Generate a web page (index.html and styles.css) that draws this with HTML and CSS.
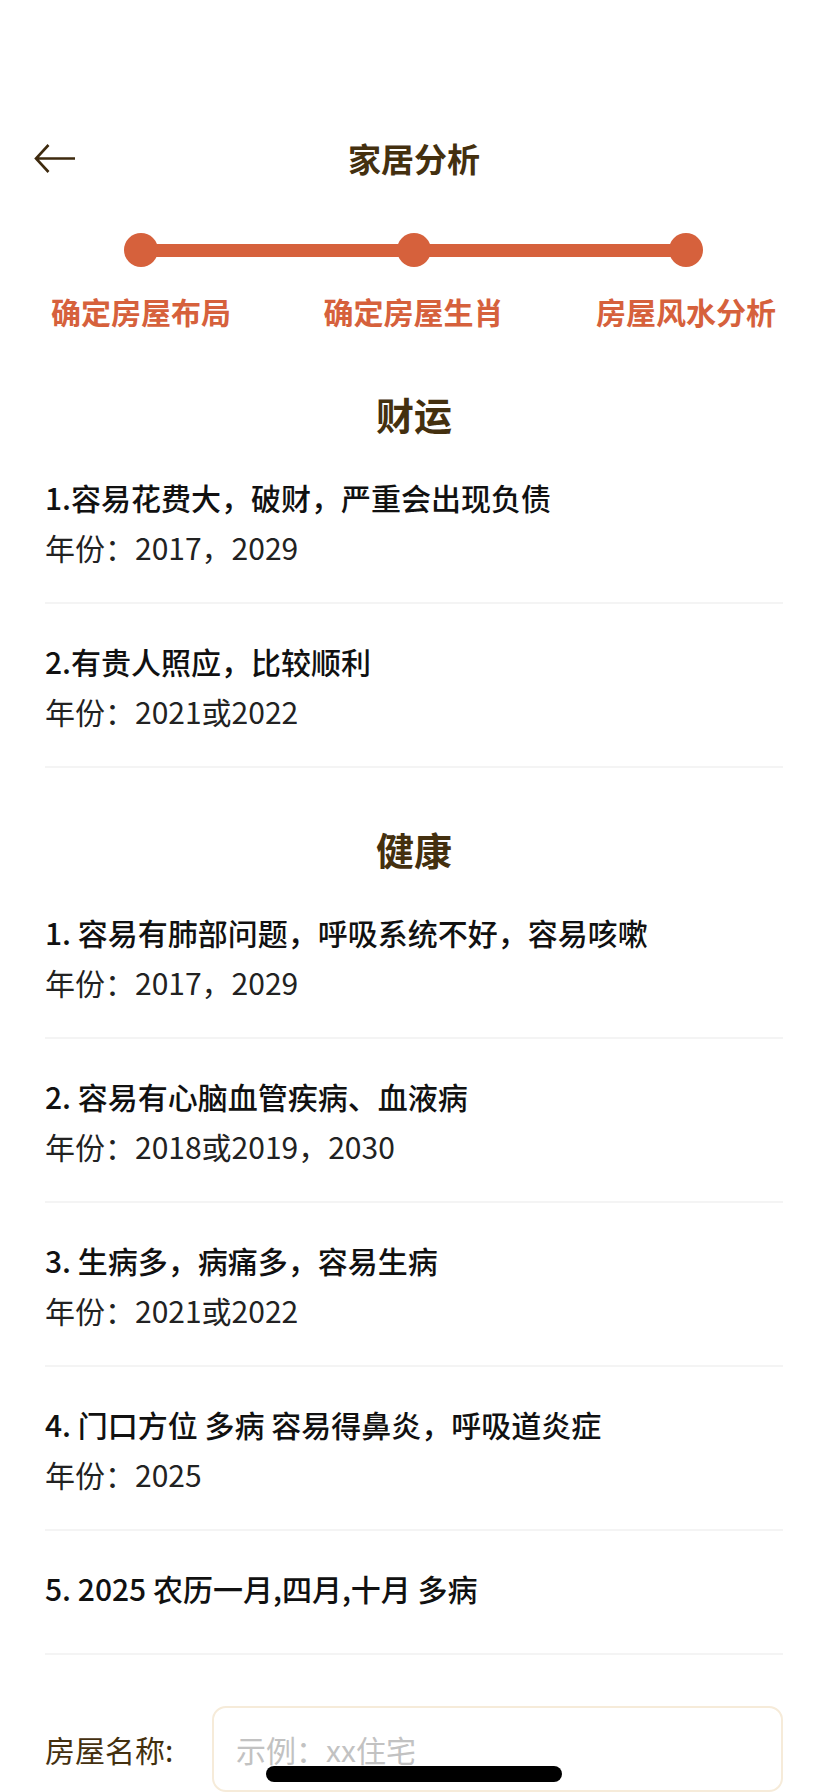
FILE: index.html
```html
<!doctype html>
<html>
<head>
<meta charset="utf-8">
<title>家居分析</title>
<link rel="stylesheet" href="styles.css">
</head>

<body>
	<div class="page">
	<div class="nav">
		<a class="back" href="#"><svg width="42" height="31" viewBox="0 0 42 31"><path d="M41 15.5H2.5M14.5 2L2 15.5L14.5 29" fill="none" stroke="#3e2a0e" stroke-width="2.6"/></svg></a>
		<h1 class="nav-title">家居分析</h1>
		<span></span>
	</div>

	<div class="steps">
		<div class="step"><i class="dot"></i><span>确定房屋布局</span></div>
		<div class="step"><i class="dot"></i><span>确定房屋生肖</span></div>
		<div class="step"><i class="dot"></i><span>房屋风水分析</span></div>
	</div>

	<div class="group">
		<h2 class="group-title">财运</h2>
		<ul class="list">
			<li class="item"><p class="item-text">1.容易花费大，破财，严重会出现负债</p><p class="item-year">年份：2017，2029</p></li>
			<li class="item"><p class="item-text">2.有贵人照应，比较顺利</p><p class="item-year">年份：2021或2022</p></li>
		</ul>
	</div>

	<div class="group">
		<h2 class="group-title">健康</h2>
		<ul class="list">
			<li class="item"><p class="item-text">1. 容易有肺部问题，呼吸系统不好，容易咳嗽</p><p class="item-year">年份：2017，2029</p></li>
			<li class="item"><p class="item-text">2. 容易有心脑血管疾病、血液病</p><p class="item-year">年份：2018或2019，2030</p></li>
			<li class="item"><p class="item-text">3. 生病多，病痛多，容易生病</p><p class="item-year">年份：2021或2022</p></li>
			<li class="item"><p class="item-text">4. 门口方位 多病 容易得鼻炎，呼吸道炎症</p><p class="item-year">年份：2025</p></li>
			<li class="item"><p class="item-text">5. 2025 农历一月,四月,十月 多病</p></li>
		</ul>
	</div>

	<div class="field">
		<label class="field-label">房屋名称:</label>
		<input class="field-input" type="text" placeholder="示例：xx住宅">
	</div>
	</div>
	<div class="home-bar"></div>
</body>
</html>
```
FILE: styles.css
```css
html,body{
	margin:0;
	padding:0;
	background:#fff;
}
body{
	font-family:"Noto Sans CJK SC","Noto Sans",sans-serif;
	color:#111;
	overflow:hidden;
}
.page{
	width:828px;
	height:1792px;
	box-sizing:border-box;
	padding-top:128px;
}
/* 顶部导航 */
.nav{
	display:grid;
	grid-template-columns:1fr auto 1fr;
	align-items:center;
	height:60px;
	padding:0 34px;
}
.back{
	display:flex;
	align-items:center;
	width:42px;
	height:31px;
}
.nav-title{
	margin:0;
	font-size:33px;
	font-weight:700;
	color:#44300f;
	line-height:60px;
}
/* 步骤条 */
.steps{
	position:relative;
	display:flex;
	justify-content:space-between;
	padding:0 52px 0 51px;
	margin-top:45px;
}
.steps:before{
	content:"";
	position:absolute;
	left:146px;
	right:146px;
	top:11px;
	height:13px;
	background:#d6613c;
}
.step{
	position:relative;
	display:flex;
	flex-direction:column;
	align-items:center;
}
.dot{
	display:block;
	width:34px;
	height:34px;
	border-radius:50%;
	background:#d6613c;
}
.step span{
	margin-top:24px;
	font-size:30px;
	line-height:40px;
	font-weight:700;
	color:#d6613c;
	white-space:nowrap;
}
/* 分组 */
.group{
	margin-top:57px;
}
.group + .group{
	margin-top:55px;
}
.group-title{
	margin:0;
	text-align:center;
	font-size:38px;
	line-height:52px;
	font-weight:700;
	color:#44300f;
}
.list{
	list-style:none;
	margin:0;
	padding:0 45px;
}
.item{
	padding:27px 0 35px;
	border-bottom:2px solid #f4f4f4;
}
.item p{
	margin:0;
}
.item-text{
	font-size:30px;
	line-height:60px;
	font-weight:500;
	color:#111;
}
.item-year{
	font-size:30px;
	line-height:40px;
	color:#222;
}
/* 输入框 */
.field{
	display:flex;
	align-items:center;
	margin-top:51px;
	padding:0 45px;
}
.field-label{
	flex:none;
	width:167px;
	font-size:30px;
	color:#44300f;
}
.field-input{
	flex:1;
	min-width:0;
	height:86px;
	box-sizing:border-box;
	padding:0 22px;
	border:2px solid #f6ebd9;
	border-radius:14px;
	font-family:inherit;
	font-size:30px;
	outline:none;
}
.field-input::placeholder{
	color:#c2c2c2;
}
.home-bar{
	position:fixed;
	left:50%;
	bottom:10px;
	width:296px;
	height:16px;
	margin-left:-148px;
	border-radius:8px;
	background:#000;
}
```
